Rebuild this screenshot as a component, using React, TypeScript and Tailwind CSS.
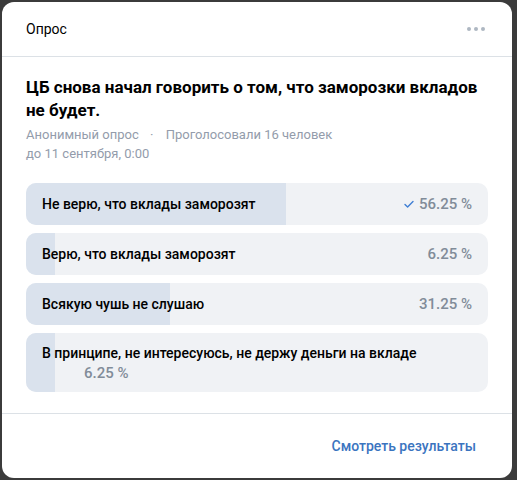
const options = [
  { label: "Не верю, что вклады заморозят", pct: 56.25, mine: true },
  { label: "Верю, что вклады заморозят", pct: 6.25 },
  { label: "Всякую чушь не слушаю", pct: 31.25 },
  { label: "В принципе, не интересуюсь, не держу деньги на вкладе", pct: 6.25, wrap: true },
];

function Check() {
  return (
    <svg width="12" height="12" viewBox="0 0 12 12" className="mr-1 text-[#3f7fd4]">
      <path d="M2 6.5l2.6 2.5L10 3.5" fill="none" stroke="currentColor" strokeWidth="1.4" strokeLinecap="round" strokeLinejoin="round" />
    </svg>
  );
}

export default function App() {
  return (
    <div className="h-[480px] w-[517px] bg-[#3b3b3b] p-[2px] pr-[5px] font-['Roboto',sans-serif]">
      <div className="flex h-[476px] flex-col rounded-xl bg-white">
        <div className="flex h-[55px] items-center justify-between border-b border-[#dce1e6] pl-6 pr-[27px]">
          <span className="text-[14px] text-black">Опрос</span>
          <span className="flex gap-[3px]">
            <i className="h-[4px] w-[4px] rounded-full bg-[#aeb7c2]" />
            <i className="h-[4px] w-[4px] rounded-full bg-[#aeb7c2]" />
            <i className="h-[4px] w-[4px] rounded-full bg-[#aeb7c2]" />
          </span>
        </div>
        <div className="flex-1 px-6 pt-[19px]">
          <h1 className="text-[17px] font-bold leading-[23px] text-black">
            ЦБ снова начал говорить о том, что заморозки вкладов не будет.
          </h1>
          <div className="mt-[3px] text-[13px] leading-[19px] text-[#939cab]">
            <div>
              Анонимный опрос <span className="ml-[8px] mr-[9px]">·</span> Проголосовали 16 человек
            </div>
            <div>до 11 сентября, 0:00</div>
          </div>
          <div className="mt-[20px] flex flex-col gap-2">
            {options.map((o) => (
              <div key={o.label} className="relative overflow-hidden rounded-[10px] bg-[#f0f2f5]">
                <div className="absolute inset-y-0 left-0 bg-[#dae2ed]" style={{ width: `${o.pct}%` }} />
                {o.wrap ? (
                  <div className="relative px-4 pb-[9px] pt-[10px]">
                    <div className="text-[14px] font-medium leading-[20px] text-black">{o.label}</div>
                    <div className="ml-[42px] text-[15px] font-medium leading-[20px] text-[#818c99]">{o.pct} %</div>
                  </div>
                ) : (
                  <div className="relative flex h-[42px] items-center justify-between px-4">
                    <span className="text-[14px] font-medium text-black">{o.label}</span>
                    <span className="flex items-center text-[15px] font-medium text-[#818c99]">
                      {o.mine && <Check />}
                      {o.pct} %
                    </span>
                  </div>
                )}
              </div>
            ))}
          </div>
        </div>
        <div className="flex h-[65px] items-center justify-end border-t border-[#dce1e6] pr-[36px]">
          <span className="text-[14px] font-medium text-[#3a74bf]">Смотреть результаты</span>
        </div>
      </div>
    </div>
  );
}
